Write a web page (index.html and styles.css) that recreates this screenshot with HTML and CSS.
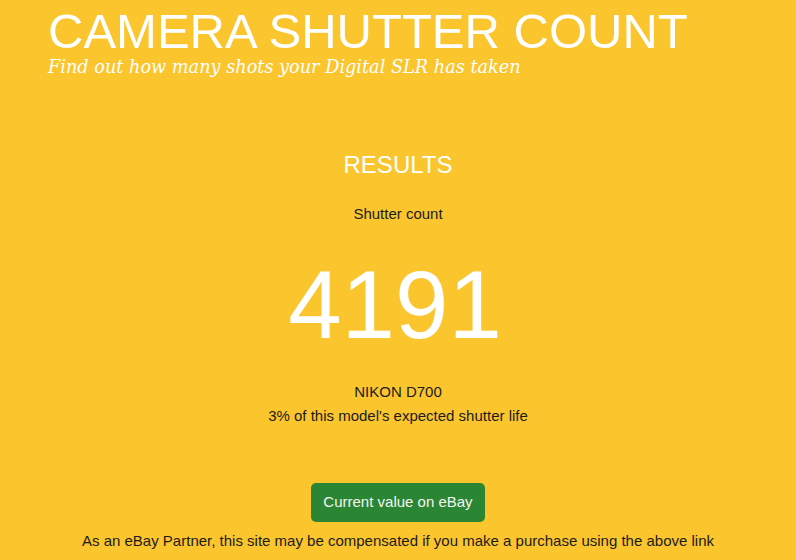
FILE: index.html
```html
<!DOCTYPE html>
<html lang="en">
<head>
    <meta charset="UTF-8">
    <meta name="viewport" content="width=device-width, initial-scale=1.0">
    <title>Camera Shutter Count</title>
    <link rel="stylesheet" href="styles.css">
</head>
<body>
    <!-- header -->
    <div class="header">
        <h1 class="site-title">CAMERA SHUTTER COUNT</h1>
        <div class="tagline">Find out how many shots your Digital SLR has taken</div>
    </div>

    <!-- results -->
    <div class="results">
        <h2 class="results-title">RESULTS</h2>
        <div class="count-label">Shutter count</div>
        <div class="count">4191</div>
        <div class="model-info">
            <div>NIKON D700</div>
            <div>3% of this model's expected shutter life</div>
        </div>
        <a class="ebay-button" href="#">Current value on eBay</a>
        <div class="disclaimer">As an eBay Partner, this site may be compensated if you make a purchase using the above link</div>
    </div>
</body>
</html>
```

FILE: styles.css
```css
body {
    margin: 0;
    background-color: #fbc52e;
    font-family: "Liberation Sans", Arial, sans-serif;
    color: #1c1c1c;
}
.header {
    padding: 9px 0 0 48px;
}
.site-title {
    margin: 0;
    font-size: 49px;
    font-weight: normal;
    line-height: 45px;
    color: #ffffff;
}
.tagline {
    margin-top: 3px;
    font-family: "DejaVu Serif", Georgia, serif;
    font-style: italic;
    font-size: 17.7px;
    line-height: 20px;
    color: #ffffff;
}
.results {
    display: flex;
    flex-direction: column;
    align-items: center;
    text-align: center;
    font-size: 15px;
    line-height: 18px;
}
.results-title {
    margin: 74px 0 0;
    font-size: 24px;
    font-weight: normal;
    line-height: 28px;
    color: #ffffff;
}
.count-label {
    margin-top: 26px;
}
.count {
    margin: 34px 6px 0 0;
    font-size: 96px;
    line-height: 96px;
    color: #ffffff;
}
.model-info {
    margin-top: 27px;
    line-height: 24px;
}
.ebay-button {
    margin-top: 55px;
    padding: 10px 12px 11px;
    background-color: #2a8632;
    color: #f4f4f4;
    text-decoration: none;
    border-radius: 5px;
}
.disclaimer {
    margin-top: 10px;
}
```
